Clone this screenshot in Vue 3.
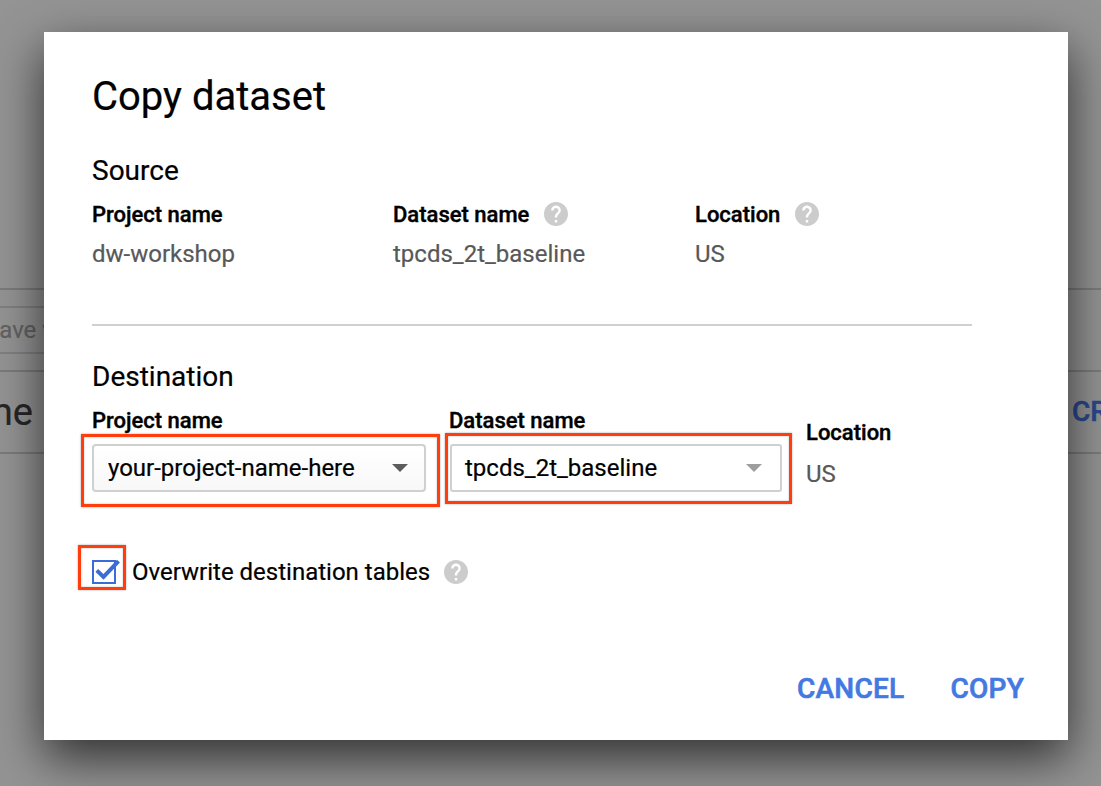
<script setup>
import { h } from 'vue'

const HelpIcon = () =>
  h('svg', { width: 24, height: 24, viewBox: '2 2 20 20', fill: '#ccc', style: 'display:block' }, [
    h('path', {
      d: 'M12 2C6.48 2 2 6.48 2 12s4.48 10 10 10 10-4.48 10-10S17.52 2 12 2zm1 17h-2v-2h2v2zm2.07-7.75l-.9.92C13.45 12.9 13 13.5 13 15h-2v-.5c0-1.1.45-2.1 1.17-2.83l1.24-1.26c.37-.36.59-.86.59-1.41 0-1.1-.9-2-2-2s-2 .9-2 2H8c0-2.21 1.79-4 4-4s4 1.79 4 4c0 .88-.36 1.68-.93 2.25z',
    }),
  ])

const source = [
  { label: 'Project name', value: 'dw-workshop', help: false },
  { label: 'Dataset name', value: 'tpcds_2t_baseline', help: true },
  { label: 'Location', value: 'US', help: true },
]
</script>

<template>
  <div class="page">
    <div class="backdrop">
      <div class="bar toolbar"><div class="save"><span>Save view</span></div></div>
      <div class="bar heading">
        <span class="name">Name</span>
        <span class="create">CREATE</span>
      </div>
    </div>

    <section class="dialog">
      <h1>Copy dataset</h1>

      <h2>Source</h2>
      <div class="source">
        <div v-for="f in source" :key="f.label">
          <div class="label"><span>{{ f.label }}</span><HelpIcon v-if="f.help" /></div>
          <div class="value">{{ f.value }}</div>
        </div>
      </div>

      <hr />

      <h2>Destination</h2>
      <div class="dest">
        <div class="field">
          <div class="label"><span>Project name</span></div>
          <div class="select shaded">
            <span>your-project-name-here</span>
            <i class="arrow"></i>
            <b class="mark mark-project"></b>
          </div>
        </div>
        <div class="field second">
          <div class="label"><span>Dataset name</span></div>
          <div class="select">
            <span>tpcds_2t_baseline</span>
            <i class="arrow light"></i>
            <b class="mark mark-dataset"></b>
          </div>
        </div>
        <div class="location">
          <div class="label"><span>Location</span></div>
          <div class="value">US</div>
        </div>
      </div>

      <div class="overwrite">
        <div class="checkbox">
          <svg width="30" height="26" viewBox="0 0 30 26" fill="none" stroke="#3b6bd6">
            <rect x="1" y="2" width="22" height="22" stroke-width="2" />
            <path d="M4.8 11.3L11.5 18L26.5 2.2" stroke-width="4" />
          </svg>
          <b class="mark mark-check"></b>
        </div>
        <span>Overwrite destination tables</span>
        <HelpIcon />
      </div>

      <div class="actions">
        <button>CANCEL</button>
        <button>COPY</button>
      </div>
    </section>
  </div>
</template>

<style>
body {
  margin: 0;
  overflow: hidden;
}
</style>

<style scoped>
.page {
  position: relative;
  box-sizing: border-box;
  width: 1101px;
  height: 786px;
  padding: 32px 33px 46px 44px;
  overflow: hidden;
  background: #949494;
  font-family: Roboto, "Liberation Sans", sans-serif;
  color: #000;
  -webkit-text-stroke: 0.2px;
}
.backdrop {
  position: absolute;
  inset: 288px 0 auto 0;
}
.bar {
  box-sizing: border-box;
  border-top: 2px solid #7b7b7b;
}
.toolbar {
  height: 82px;
  padding-top: 16px;
}
.save {
  box-sizing: border-box;
  width: 120px;
  height: 48px;
  border: 2px solid #808080;
  border-left: 0;
  font-size: 24px;
  line-height: 44px;
  color: #626262;
}
.save span {
  display: block;
  margin-left: -15px;
  white-space: nowrap;
}
.heading {
  display: flex;
  justify-content: space-between;
  height: 84px;
  border-bottom: 2px solid #7b7b7b;
  line-height: 80px;
}
.name {
  width: 33px;
  direction: rtl;
  font-size: 38px;
  color: #262626;
}
.create {
  width: 29px;
  font-size: 28px;
  font-weight: 500;
  color: #2b478c;
  -webkit-text-stroke: 0.5px;
}
.dialog {
  position: relative;
  box-sizing: border-box;
  width: 1024px;
  height: 708px;
  padding: 41px 44px 36px 48px;
  background: #fff;
  box-shadow: 0 18px 46px rgba(0, 0, 0, 0.68);
}
h1 {
  margin: 0 0 34px;
  font-size: 40px;
  font-weight: 400;
  line-height: 48px;
}
h2 {
  margin: 0 0 13px;
  font-size: 28px;
  font-weight: 400;
  line-height: 32px;
}
.source {
  display: grid;
  grid-template-columns: 301px 302px auto;
}
.label {
  display: flex;
  align-items: center;
  gap: 14.4px;
  height: 28px;
  font-size: 22px;
  font-weight: 500;
  line-height: 28px;
  -webkit-text-stroke: 0.4px;
}
.label span {
  padding-top: 2px;
}
.value {
  margin-top: 12px;
  font-size: 24px;
  line-height: 28px;
  color: #585858;
}
hr {
  width: 880px;
  height: 2px;
  margin: 56px 0 35px;
  border: 0;
  background: #d0d0d0;
}
.dest {
  display: flex;
  gap: 24px;
  height: 86px;
}
.field {
  width: 334px;
}
.second {
  width: 332px;
}
.second .label {
  margin-left: -1px;
}
.select {
  position: relative;
  display: flex;
  align-items: center;
  justify-content: space-between;
  box-sizing: border-box;
  height: 48px;
  margin-top: 10px;
  padding: 0 16px 0 14px;
  border: 2px solid #d0d0d0;
  border-radius: 3px;
  font-size: 24px;
  line-height: 44px;
}
.second .select {
  padding-left: 13px;
}
.shaded {
  border-radius: 4px;
  background: linear-gradient(#fff, #f8f8f8);
}
.arrow {
  border: 8px solid transparent;
  border-top-color: #5c5c5c;
  border-bottom: 0;
}
.light {
  margin-right: 2px;
  border-top-color: #9e9e9e;
}
.location {
  padding-top: 12px;
}
.location .value {
  margin-top: 14px;
}
.mark {
  position: absolute;
  box-sizing: border-box;
  border: 3px solid #ff3d0d;
  box-shadow: 0 0 2px rgba(0, 0, 0, 0.35), inset 0 0 2px rgba(0, 0, 0, 0.3);
}
.mark-project {
  left: -13px;
  top: -12px;
  width: 359px;
  height: 73px;
}
.mark-dataset {
  left: -7px;
  top: -13px;
  width: 347px;
  height: 71px;
}
.overwrite {
  display: flex;
  align-items: center;
  height: 28px;
  margin-top: 66px;
  font-size: 24px;
}
.overwrite span {
  width: 312px;
}
.checkbox {
  position: relative;
  top: 1px;
  width: 40px;
  height: 28px;
}
.mark-check {
  left: -14px;
  top: -14px;
  width: 48px;
  height: 45px;
}
.actions {
  display: flex;
  justify-content: flex-end;
  gap: 46px;
  margin-top: 87px;
}
button {
  padding: 0;
  border: 0;
  background: none;
  font: 500 28px/32px Roboto, "Liberation Sans", sans-serif;
  letter-spacing: 0.25px;
  color: #4479e2;
  -webkit-text-stroke: 0.6px;
}
</style>
